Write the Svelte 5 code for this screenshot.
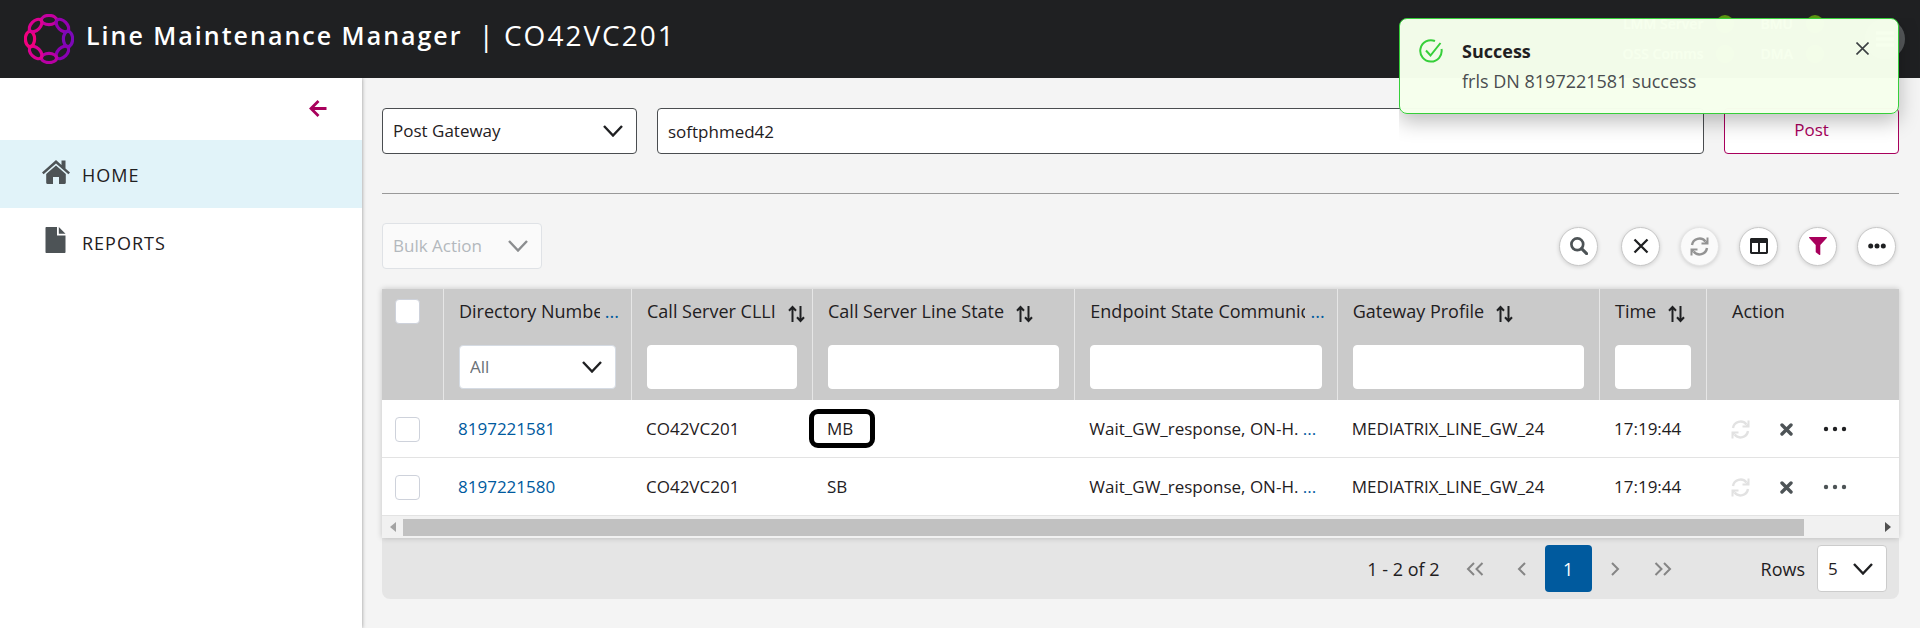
<script>
  const petals = ['#c400a0', '#9500b0', '#7d08b8', '#8a00b4', '#b800a4', '#dc0094', '#f2007e', '#dc0092'];

  const columns = [
    { label: 'Directory Number', kind: 'select', clipped: true },
    { label: 'Call Server CLLI', kind: 'text' },
    { label: 'Call Server Line State', kind: 'text' },
    { label: 'Endpoint State Communication', kind: 'text', clipped: true },
    { label: 'Gateway Profile', kind: 'text' },
    { label: 'Time', kind: 'text' }
  ];

  const rows = [
    { dn: '8197221581', clli: 'CO42VC201', state: 'MB', endpoint: 'Wait_GW_response, ON-H.', profile: 'MEDIATRIX_LINE_GW_24', time: '17:19:44', marked: true },
    { dn: '8197221580', clli: 'CO42VC201', state: 'SB', endpoint: 'Wait_GW_response, ON-H.', profile: 'MEDIATRIX_LINE_GW_24', time: '17:19:44', marked: false }
  ];

  let gateway = $state('softphmed42');
</script>

{#snippet chevron()}
  <svg class="chevron" width="20" height="12" viewBox="0 0 20 12" aria-hidden="true"><path d="M1 1l9 9.5L19 1" fill="none" stroke="currentColor" stroke-width="2.4" /></svg>
{/snippet}

{#snippet refresh()}
  <svg width="19" height="19" viewBox="0 0 19 19" aria-hidden="true">
    <path d="M2 8A7.6 7.6 0 0 1 15.4 4.4M17 11A7.6 7.6 0 0 1 3.6 14.6" fill="none" stroke="currentColor" stroke-width="2.4" />
    <path d="M18.5.5v7h-7v-2h3.2l1.8-2V.5zM.5 18.5v-7h7v2H4.300l-1.800 2v3z" fill="currentColor" />
  </svg>
{/snippet}

<header>
  <svg class="logo" width="50" height="50" viewBox="-25 -25 50 50" aria-hidden="true">
    {#each petals as color, i}
      <ellipse cy="-19" rx="7.600" ry="4.600" fill="none" stroke={color} stroke-width="3.200" transform="rotate({i * 45})" />
    {/each}
  </svg>
  <h1>Line Maintenance Manager</h1>
  <span class="node"><span class="bar">|</span>CO42VC201</span>
  <div class="status">
    <span>LMM Server</span><i></i><span>BMU</span><i></i>
    <span>OSS Comms</span><i></i><span>DMA</span><i></i>
  </div>
  <button class="menu" aria-label="Menu">
    <svg width="18" height="16" viewBox="0 0 18 16"><path d="M0 2h18M0 8h18M0 14h18" stroke="#fff" stroke-width="3" /></svg>
  </button>
</header>

<div class="body">
  <nav>
    <button class="collapse" aria-label="Collapse">
      <svg width="18" height="17" viewBox="0 0 18 17"><path d="M9.500 1L2 8.500l7.500 7.500M2 8.500h15.500" fill="none" stroke="#a8005c" stroke-width="2.800" /></svg>
    </button>
    <a class="active" href="#home">
      <svg width="28" height="24" viewBox="0 0 28 24" fill="#4d5356" aria-hidden="true">
        <path d="M14 0L0 12.500l1.600 1.800L14 3.400l12.400 10.900L28 12.500l-4.500-4V.6h-4v4.300z" />
        <path d="M14 5.400L4.200 14v8.800c0 .7.400 1.200 1.200 1.200H11v-7h6v7h5.600c.8 0 1.200-.5 1.200-1.200V14z" />
      </svg>
      <span>HOME</span>
    </a>
    <a href="#reports">
      <svg width="28" height="26" viewBox="0 0 28 26" fill="#4d5356" aria-hidden="true">
        <path d="M4.500 0H15v8.500h8.500V25c0 .6-.4 1-1 1h-18c-.6 0-1-.4-1-1V1c0-.6.400-1 1-1z" /><path d="M16.800 0l6.700 6.700h-6.700z" />
      </svg>
      <span>REPORTS</span>
    </a>
  </nav>

  <main>
    <form class="post">
      <div class="pick wide">
        <select aria-label="Post type"><option>Post Gateway</option></select>
        {@render chevron()}
      </div>
      <input class="gateway" type="text" aria-label="Gateway name" bind:value={gateway} />
      <button type="button">Post</button>
    </form>
    <hr />
    <div class="toolbar">
      <div class="pick bulk">
        <select aria-label="Bulk action" disabled><option>Bulk Action</option></select>
        {@render chevron()}
      </div>
      <div class="tools">
        <button class="first" aria-label="Search">
          <svg width="18" height="18" viewBox="0 0 18 18"><circle cx="7.300" cy="7.300" r="5.900" fill="none" stroke="#4d5356" stroke-width="2.700" /><path d="M11.600 11.600l5 5" stroke="#4d5356" stroke-width="3" stroke-linecap="round" /></svg>
        </button>
        <button aria-label="Clear">
          <svg width="16" height="16" viewBox="0 0 16 16"><path d="M1.500 1.500l13 13M14.500 1.500l-13 13" stroke="#1f2022" stroke-width="2.300" /></svg>
        </button>
        <button class="off" aria-label="Refresh" disabled>{@render refresh()}</button>
        <button aria-label="Columns">
          <svg width="18" height="16" viewBox="0 0 18 16"><path fill-rule="evenodd" d="M1.500 0h15c.8 0 1.500.6 1.500 1.400v13.200c0 .8-.7 1.400-1.500 1.400h-15C.7 16 0 15.400 0 14.600V1.400C0 .6.700 0 1.500 0zM2 5v9h6V5zM10 5v9h6V5z" fill="#1f2022" /></svg>
        </button>
        <button aria-label="Filter">
          <svg width="18" height="18" viewBox="0 0 18 18"><path d="M.5 0h17c.5 0 .6.500.3.900L11.300 8v9.500c0 .5-.5.700-.9.400L7.100 15.500c-.3-.2-.4-.5-.4-.8V8L.2.900C-.1.500 0 0 .5 0z" fill="#a8005c" /></svg>
        </button>
        <button aria-label="More">
          <svg width="18" height="6" viewBox="0 0 18 6" fill="#1f2022"><circle cx="2.700" cy="3" r="2.500" /><circle cx="9" cy="3" r="2.500" /><circle cx="15.300" cy="3" r="2.500" /></svg>
        </button>
      </div>
    </div>

    <section class="grid">
      <table>
        <colgroup><col class="c-check" /><col class="c-dn" /><col class="c-clli" /><col /><col /><col /><col class="c-time" /><col class="c-action" /></colgroup>
        <thead>
          <tr>
            <th class="check"><input type="checkbox" aria-label="Select all" /></th>
            {#each columns as column}
              <th>
                <div class="label" class:clipped={column.clipped}>
                  <span>{column.label}</span>
                  {#if column.clipped}
                    <a href="#more">...</a>
                  {:else}
                    <svg width="17" height="18" viewBox="0 0 17 18" aria-hidden="true"><path d="M4.500 17V2.500M1 5.800l3.500-3.800L8 5.800M12.500 1v14.500M9 12.200l3.500 3.800 3.500-3.800" fill="none" stroke="#1f2022" stroke-width="2" /></svg>
                  {/if}
                </div>
                {#if column.kind === 'select'}
                  <div class="pick filter">
                    <select aria-label={column.label}><option>All</option></select>
                    {@render chevron()}
                  </div>
                {:else}
                  <input class="filter" type="text" aria-label={column.label} />
                {/if}
              </th>
            {/each}
            <th class="action"><div class="label">Action</div></th>
          </tr>
        </thead>
        <tbody>
          {#each rows as row}
            <tr>
              <td class="check"><input type="checkbox" aria-label="Select {row.dn}" /></td>
              <td><a href="#dn">{row.dn}</a></td>
              <td>{row.clli}</td>
              <td><span class:marked={row.marked}>{row.state}</span></td>
              <td>{row.endpoint} <a href="#endpoint">...</a></td>
              <td>{row.profile}</td>
              <td>{row.time}</td>
              <td class="action">
                <div class="actions">
                  <button class="sync" aria-label="Refresh line" disabled>{@render refresh()}</button>
                  <button aria-label="Remove line"><svg width="13" height="13" viewBox="0 0 13 13"><path d="M2 2l9 9M11 2l-9 9" stroke="#4d5356" stroke-width="3.400" stroke-linecap="round" /></svg></button>
                  <button class="dots" class:dark={row.marked} aria-label="More actions"><svg width="24" height="6" viewBox="0 0 24 6" fill="currentColor"><circle cx="3" cy="3" r="2.200" /><circle cx="12" cy="3" r="2.200" /><circle cx="21" cy="3" r="2.200" /></svg></button>
                </div>
              </td>
            </tr>
          {/each}
        </tbody>
      </table>
      <div class="scroll" aria-hidden="true">
        <svg width="6" height="10" viewBox="0 0 6 10"><path d="M6 0v10L0 5z" fill="#a3a3a3" /></svg>
        <div class="track"><div class="thumb"></div></div>
        <svg width="6" height="10" viewBox="0 0 6 10"><path d="M0 0v10l6-5z" fill="#505050" /></svg>
      </div>
    </section>

    <footer>
      <span class="range">1 - 2 of 2</span>
      <button class="step" aria-label="First page"><svg width="18" height="14" viewBox="0 0 18 14"><path d="M8 1L2 7l6 6M16.500 1l-6 6 6 6" /></svg></button>
      <button class="step" aria-label="Previous page"><svg width="9" height="14" viewBox="0 0 9 14"><path d="M8 1L2 7l6 6" /></svg></button>
      <button class="page">1</button>
      <button class="step" aria-label="Next page"><svg width="9" height="14" viewBox="0 0 9 14"><path d="M1 1l6 6-6 6" /></svg></button>
      <button class="step" aria-label="Last page"><svg width="18" height="14" viewBox="0 0 18 14"><path d="M1.500 1l6 6-6 6M10 1l6 6-6 6" /></svg></button>
      <label for="rows">Rows</label>
      <div class="pick rows">
        <select id="rows"><option>5</option></select>
        {@render chevron()}
      </div>
    </footer>
  </main>
</div>

<div class="toast" role="status">
  <svg width="24" height="24" viewBox="0 0 24 24" fill="none" stroke="#36cf3a" stroke-width="2" aria-hidden="true"><path d="M22.500 10a10.700 10.700 0 1 1-6.500-8" /><path d="M7 11.500l4.500 5L21.500 4" /></svg>
  <div class="message">
    <strong>Success</strong>
    <p>frls DN 8197221581 success</p>
  </div>
  <button aria-label="Close"><svg width="13" height="13" viewBox="0 0 13 13"><path d="M.5.5l12 12M12.500.5l-12 12" stroke="#3c4043" stroke-width="1.600" /></svg></button>
</div>

<style>
  :global(body) {
    background: #f4f4f4;
    font-family: 'Open Sans', sans-serif;
    font-size: 18px;
    line-height: 24px;
    color: #1f2022;
  }
  :global(#app) {
    display: flex;
    flex-direction: column;
    min-height: 100vh;
  }
  * {
    box-sizing: border-box;
  }
  svg {
    display: block;
    flex: none;
  }
  button {
    border: 0;
    padding: 0;
    background: none;
    font: inherit;
    color: inherit;
  }
  a {
    color: #005a9e;
    text-decoration: none;
  }
  header {
    display: flex;
    align-items: center;
    height: 78px;
    padding: 0 15px 0 24px;
    background: #1f2022;
    color: #fff;
  }
  h1 {
    margin: 0 0 8px 12px;
    font-size: 25px;
    font-weight: 600;
    letter-spacing: 2px;
    white-space: nowrap;
  }
  .node {
    flex: 1;
    margin: 0 0 8px 16px;
    font-size: 28px;
    letter-spacing: 2px;
    white-space: nowrap;
  }
  .bar {
    margin-right: 8px;
  }
  .status {
    display: grid;
    grid-template-columns: auto 18px auto 18px;
    align-items: center;
    gap: 12px 13px;
    margin-right: 41px;
    font-size: 14px;
    font-weight: 600;
    line-height: 18px;
  }
  .status span {
    padding-left: 13px;
    text-align: right;
  }
  .status i {
    width: 18px;
    height: 18px;
    border-radius: 50%;
    background: #5a9410;
  }
  .menu {
    display: grid;
    place-items: center;
    width: 40px;
    height: 40px;
    border-radius: 50%;
    background: #55585a;
  }
  .body {
    display: flex;
    flex: 1;
  }
  nav {
    flex: none;
    width: 362px;
    background: #fff;
    box-shadow: 0 0 4px rgba(0, 0, 0, 0.4);
    clip-path: inset(0 -6px 0 0);
  }
  .collapse {
    display: block;
    margin: 22px 35px 23px auto;
  }
  nav a {
    display: flex;
    align-items: center;
    gap: 12px;
    height: 68px;
    padding-left: 42px;
    font-weight: 500;
    letter-spacing: 1px;
    color: #1f2022;
  }
  nav a svg {
    margin-bottom: 4px;
  }
  nav a span {
    padding-top: 2px;
  }
  nav .active {
    background: #e1f3f9;
  }
  main {
    flex: 1;
    min-width: 0;
    padding: 30px 21px 28px 20px;
  }
  .post {
    display: flex;
    gap: 20px;
  }
  .pick {
    display: grid;
    align-items: center;
  }
  .pick > :global(*) {
    grid-area: 1 / 1;
  }
  .pick .chevron {
    justify-self: end;
    margin-right: 14px;
    pointer-events: none;
  }
  select,
  input[type='text'] {
    width: 100%;
    height: 46px;
    margin: 0;
    padding: 0 10px;
    appearance: none;
    border: 1px solid #4a4d50;
    border-radius: 4px;
    background: #fff;
    font: inherit;
    font-size: 17px;
    color: inherit;
  }
  .wide {
    width: 255px;
  }
  .post .gateway {
    flex: 1;
    width: auto;
  }
  .post button {
    width: 175px;
    padding-bottom: 3px;
    border: 1px solid #a8005c;
    border-radius: 4px;
    background: #fff;
    color: #a8005c;
    font-size: 17px;
  }
  hr {
    margin: 39px 0 29px;
    border: 0;
    border-top: 1px solid #999;
  }
  .toolbar {
    display: flex;
    align-items: center;
    justify-content: space-between;
  }
  .bulk {
    width: 160px;
    color: #8b8d8f;
  }
  .bulk select {
    border-color: #dfe2e6;
    background: #fafafa;
    color: #b3b8bd;
    opacity: 1;
  }
  .tools {
    display: flex;
    gap: 20px;
    margin-right: 3px;
  }
  .tools button {
    display: grid;
    place-items: center;
    width: 39px;
    height: 39px;
    border: 1px solid #c8c8c8;
    border-radius: 50%;
    background: #fff;
    box-shadow: 0 1px 4px rgba(0, 0, 0, 0.16);
  }
  .tools .first {
    margin-right: 3px;
  }
  .tools .off {
    border-color: #e4e4e4;
    background: #fafafa;
    color: #939393;
  }
  .grid {
    position: relative;
    margin-top: 20px;
    background: #fff;
    box-shadow: 0 0 6px rgba(0, 0, 0, 0.2);
  }
  table {
    width: 100%;
    table-layout: fixed;
    border-collapse: separate;
    border-spacing: 0;
  }
  .c-check {
    width: 62px;
  }
  .c-dn {
    width: 188px;
  }
  .c-clli {
    width: 181px;
  }
  .c-time {
    width: 107px;
  }
  .c-action {
    width: 192px;
  }
  th {
    height: 111px;
    padding: 10px 15px 11px;
    border-right: 1px solid #e6e6e6;
    background: #cacaca;
    font-weight: 500;
    text-align: left;
    vertical-align: top;
  }
  th.action {
    padding-left: 25px;
    border-right: 0;
  }
  .label {
    display: flex;
    align-items: center;
    gap: 12px;
    margin: 0 -3px 22px 0;
    white-space: nowrap;
  }
  .clipped {
    gap: 5px;
  }
  .clipped span {
    overflow: hidden;
  }
  .label svg {
    margin-top: 5px;
  }
  input.filter,
  .filter select {
    height: 44px;
    border-color: #fff;
  }
  .filter select {
    border-color: #d5dbe3;
    color: #6b7177;
    font-weight: 400;
  }
  td {
    height: 58px;
    padding: 1px 0 0 14px;
    border-bottom: 1px solid #e3e3e3;
    font-size: 17px;
    white-space: nowrap;
  }
  th.check,
  td.check {
    padding-left: 13px;
  }
  input[type='checkbox'] {
    display: block;
    width: 25px;
    height: 25px;
    margin: 0;
    appearance: none;
    border: 1px solid #ced2db;
    border-radius: 4px;
    background: #fff;
  }
  .marked {
    position: relative;
  }
  .marked::after {
    content: '';
    position: absolute;
    inset: -8px -22px -8px -18px;
    border: 5px solid #000;
    border-radius: 9px;
  }
  td.action {
    padding-left: 24px;
  }
  .actions {
    display: flex;
    align-items: center;
    gap: 30px;
  }
  .sync {
    color: #e2e2e2;
  }
  .dots {
    color: #4d5356;
  }
  .dots.dark {
    color: #1f2022;
  }
  .scroll {
    display: flex;
    align-items: center;
    gap: 7px;
    height: 22px;
    padding: 0 8px;
    background: #f1f1f1;
  }
  .track {
    flex: 1;
  }
  .thumb {
    width: 95%;
    height: 17px;
    background: #c1c1c1;
  }
  footer {
    display: flex;
    align-items: center;
    justify-content: flex-end;
    height: 61px;
    padding-right: 12px;
    border-radius: 0 0 8px 8px;
    background: #e5e5e5;
  }
  .range {
    margin-right: 15px;
  }
  .step {
    display: grid;
    place-items: center;
    width: 40px;
    height: 47px;
  }
  .step path {
    fill: none;
    stroke: #858585;
    stroke-width: 2;
  }
  .step + .step {
    margin-left: 7px;
  }
  .page {
    width: 47px;
    height: 47px;
    margin: 0 4px 0 3px;
    border-radius: 4px;
    background: #005a9e;
    color: #fff;
  }
  label {
    margin: 0 12px 0 78px;
  }
  .rows {
    width: 70px;
  }
  .rows select {
    height: 47px;
    border-color: #ccc;
  }
  .toast {
    position: absolute;
    top: 18px;
    right: 21px;
    display: flex;
    width: 500px;
    height: 96px;
    padding: 20px 29px 0 19px;
    border: 1px solid #36cf3a;
    border-radius: 8px;
    background: rgba(246, 255, 237, 0.985);
    box-shadow: 0 8px 20px rgba(0, 0, 0, 0.25);
    clip-path: inset(0 -20px -40px 0);
  }
  .message {
    flex: 1;
    margin-left: 19px;
  }
  .message strong {
    display: block;
    font-weight: 700;
  }
  .message p {
    margin: 6px 0 0;
    color: #4a4d50;
  }
  .toast button {
    align-self: flex-start;
    margin-top: 3px;
  }
</style>
